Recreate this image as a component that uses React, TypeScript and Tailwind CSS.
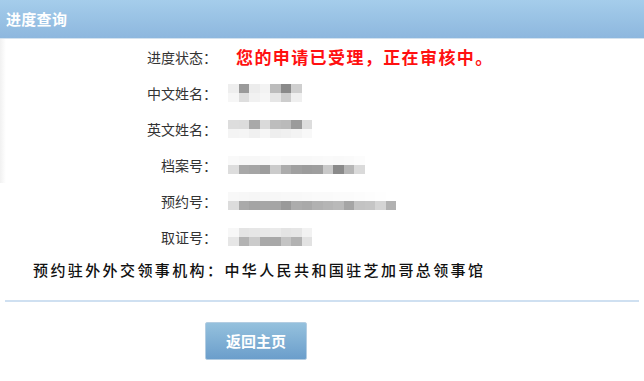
import React from "react";

const FONT = '"Noto Sans CJK SC", "Noto Sans", sans-serif';

type Mosaic = string[][];

const mosaics: Record<string, Mosaic> = {
  cn: [
    ["#eeeeee", "#9a9a9a", "#ececec", "#f3f3f3", "#bcbcbc", "#8a8a8a", "#cfcfcf"],
    ["#f6f6f6", "#dedede", "#f1f1f1", "#f6f6f6", "#e6e6e6", "#cdcdcd", "#efefef"],
  ],
  en: [
    ["#dddddd", "#dcdcdc", "#a9a9a9", "#dadada", "#bdbdbd", "#bababa", "#9b9b9b", "#dddddd"],
    ["#f4f4f4", "#f5f5f5", "#f0f0f0", "#f6f6f6", "#eeeeee", "#f0f0f0", "#f3f3f3", "#f8f8f8"],
  ],
  file: [
    ["#f9f9f9", "#f7f7f7", "#f7f7f7", "#f8f8f8", "#fafafa", "#f8f8f8", "#f8f8f8", "#f8f8f8", "#f9f9f9", "#fafafa", "#f9f9f9", "#fafafa", "#fcfcfc", "#ffffff"],
    ["#dddddd", "#a8a8a8", "#a5a5a5", "#9d9d9d", "#cbcbcb", "#acacac", "#a0a0a0", "#9c9c9c", "#9e9e9e", "#c9c9c9", "#8a8a8a", "#b6b6b6", "#dadada", "#ffffff"],
  ],
  appt: [
    ["#f8f8f8", "#f7f7f7", "#f6f6f6", "#f7f7f7", "#f7f7f7", "#f8f8f8", "#f8f8f8", "#f9f9f9", "#fafafa", "#fafafa", "#fbfbfb", "#fbfbfb", "#fcfcfc", "#fdfdfd", "#fefefe", "#ffffff"],
    ["#dcdcdc", "#aaaaaa", "#a4a4a4", "#a6a6a6", "#a5a5a5", "#999999", "#acacac", "#a9a9a9", "#b1b1b1", "#b5b5b5", "#b9b9b9", "#a5a5a5", "#c3c3c3", "#c5c5c5", "#d4d4d4", "#b1b1b1"],
  ],
  cert: [
    ["#f7f7f7", "#e4e4e4", "#e6e6e6", "#e8e8e8", "#eaeaea", "#e4e4e4", "#e6e6e6", "#f2f2f2"],
    ["#e6e6e6", "#b3b3b3", "#cbcbcb", "#a9a9a9", "#a8a8a8", "#c4c4c4", "#b2b2b2", "#e2e2e2"],
  ],
};

function MosaicBlock({ data }: { data: Mosaic }) {
  return (
    <div className="flex flex-col">
      {data.map((row, ri) => (
        <div key={ri} className="flex">
          {row.map((c, ci) => (
            <div key={ci} className="w-[10.5px] h-[9px]" style={{ backgroundColor: c }} />
          ))}
        </div>
      ))}
    </div>
  );
}

function Row({ label, children }: { label: string; children: React.ReactNode }) {
  return (
    <div className="flex h-[36px] items-center">
      <div className="w-[218px] shrink-0 text-right text-[14px] text-[#333333] pr-[1px]">{label}</div>
      <div className="pl-[10px] flex items-center">{children}</div>
    </div>
  );
}

export default function App() {
  return (
    <div className="w-[644px] h-[381px] bg-white overflow-hidden" style={{ fontFamily: FONT }}>
      <div className="h-[39px] bg-gradient-to-b from-[#a5cdeb] to-[#8db7de] border-b border-[#d3e2ef] flex items-center pl-[6px]">
        <span className="text-white font-bold text-[15px] tracking-[0.3px]">进度查询</span>
      </div>
      <div className="bg-[linear-gradient(to_right,#f1f1f1,#ffffff_6px)]">
        <Row label="进度状态：">
          <span className="pl-[8px] text-[17px] font-bold text-[#ff1010] tracking-[1.4px]">
            您的申请已受理，正在审核中。
          </span>
        </Row>
        <Row label="中文姓名：">
          <MosaicBlock data={mosaics.cn} />
        </Row>
        <Row label="英文姓名：">
          <MosaicBlock data={mosaics.en} />
        </Row>
        <Row label="档案号：">
          <MosaicBlock data={mosaics.file} />
        </Row>
      </div>
      <Row label="预约号：">
        <MosaicBlock data={mosaics.appt} />
      </Row>
      <Row label="取证号：">
        <MosaicBlock data={mosaics.cert} />
      </Row>
      <div className="h-[30px] flex items-center pl-[33px]">
        <span className="text-[15px] text-[#111111] tracking-[2.4px] font-medium">
          预约驻外外交领事机构：中华人民共和国驻芝加哥总领事馆
        </span>
      </div>
      <div className="mt-[15px] mx-[5px] h-[2px] bg-[#cfe0f1]" />
      <div className="flex mt-[20px] pl-[205px]">
        <button className="w-[102px] h-[38px] rounded-[2px] bg-gradient-to-b from-[#95c1dd] to-[#6b9ecb] border border-[#b3cde2] text-white font-bold text-[15px] flex items-center justify-center">
          返回主页
        </button>
      </div>
    </div>
  );
}
